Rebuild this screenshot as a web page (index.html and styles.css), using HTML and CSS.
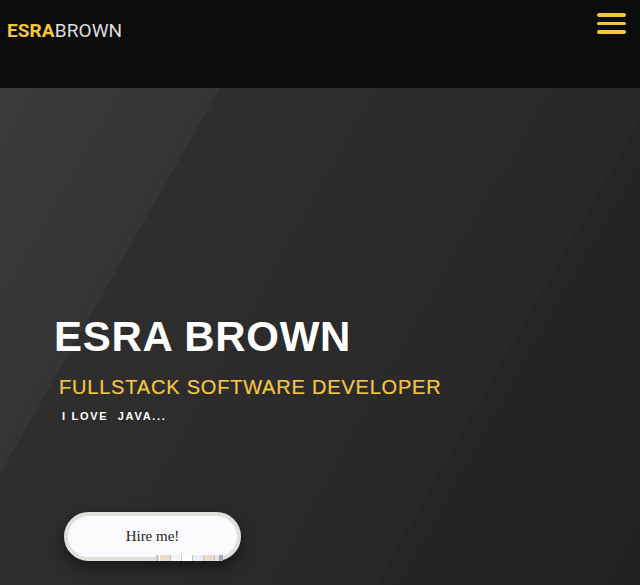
FILE: index.html
```html
<!DOCTYPE html>
<html lang="en">
<head>
<meta charset="utf-8">
<title>Esra Brown</title>
<link rel="stylesheet" href="styles.css">
</head>
<body>
<header class="topbar">
  <a class="logo" href="#"><span class="logo-first">ESRA</span><span class="logo-last">BROWN</span></a>
  <button class="menu" aria-label="Menu">
    <span class="bar"></span><span class="bar"></span><span class="bar"></span>
  </button>
</header>
<main class="hero">
  <h1 class="hero-title">ESRA BROWN</h1>
  <p class="hero-role">FULLSTACK SOFTWARE DEVELOPER</p>
  <p class="hero-typed">I LOVE  JAVA...</p>
  <div class="cta-wrap">
    <button class="cta">Hire me!</button>
    <span class="cta-strip"></span>
  </div>
</main>
</body>
</html>
```
FILE: styles.css
```css
html, body {
  margin: 0;
  padding: 0;
  background: #0b0b0b;
  overflow: hidden;
}

.topbar {
  height: 88px;
  box-sizing: border-box;
  display: flex;
  justify-content: space-between;
  align-items: flex-start;
  padding: 20px 14px 0 7px;
  background: #0b0b0b;
}

.logo {
  font-family: Roboto, "Noto Sans", sans-serif;
  font-size: 19px;
  line-height: 22px;
  text-decoration: none;
  letter-spacing: 0.1px;
}

.logo-first {
  color: #f2c641;
  font-weight: 700;
}

.logo-last {
  color: #dedede;
  font-weight: 400;
}

.menu {
  margin-top: -7px;
  padding: 0;
  border: 0;
  background: none;
  width: 29px;
  display: flex;
  flex-direction: column;
  gap: 5px;
}

.bar {
  display: block;
  width: 29px;
  height: 3.5px;
  border-radius: 2px;
  background: #f2c641;
}

.hero {
  height: 497px;
  box-sizing: border-box;
  padding-top: 225px;
  display: flex;
  flex-direction: column;
  align-items: flex-start;
  background: linear-gradient(119.7deg,
    #3b3b3b 0,
    #353535 191px,
    #2e2e2e 191px,
    #282828 572px,
    #252525 572px,
    #222222 100%);
  font-family: "Liberation Sans", Arial, sans-serif;
}

.hero-title {
  margin: 0 0 0 54px;
  font-size: 42px;
  line-height: 48px;
  font-weight: 700;
  color: #ffffff;
  letter-spacing: 0.7px;
}

.hero-role {
  margin: 14px 0 0 59px;
  font-size: 20px;
  line-height: 24px;
  font-weight: 400;
  color: #f2c641;
  letter-spacing: 0.8px;
  -webkit-text-stroke: 0.2px #f2c641;
}

.hero-typed {
  margin: 10px 0 0 62px;
  font-size: 11px;
  line-height: 14px;
  font-weight: 700;
  color: #ffffff;
  letter-spacing: 1.7px;
  white-space: pre;
}

.cta-wrap {
  position: relative;
  margin: 89px 0 0 64px;
}

.cta {
  display: block;
  width: 177px;
  height: 49px;
  box-sizing: border-box;
  border: 4px solid #e2dfda;
  border-radius: 25px;
  background: #fbfbfd;
  font-family: "Liberation Serif", "Times New Roman", serif;
  font-size: 15px;
  color: #222222;
  box-shadow: 0 6px 14px rgba(0, 0, 0, 0.5);
}

.cta-strip {
  position: absolute;
  left: 92px;
  bottom: 0;
  width: 67px;
  height: 6px;
  background: linear-gradient(90deg,
    #c9c9d1 0, #c9c9d1 3px,
    #ffffff 3px, #ffffff 4px,
    #e9ddc9 4px, #e9ddc9 14px,
    #bdbdc4 14px, #bdbdc4 15px,
    #f3f3f6 15px, #f3f3f6 25px,
    #c4c4cc 25px, #c4c4cc 26px,
    #ffffff 26px, #ffffff 36px,
    #c4c4cc 36px, #c4c4cc 37px,
    #eeeef2 37px, #eeeef2 47px,
    #c4c4cc 47px, #c4c4cc 48px,
    #e9ddc9 48px, #e9ddc9 58px,
    #bdbdc4 58px, #bdbdc4 59px,
    #e6e6ec 59px, #e6e6ec 63px,
    #a9a9b1 63px, #a9a9b1 67px);
}
```
